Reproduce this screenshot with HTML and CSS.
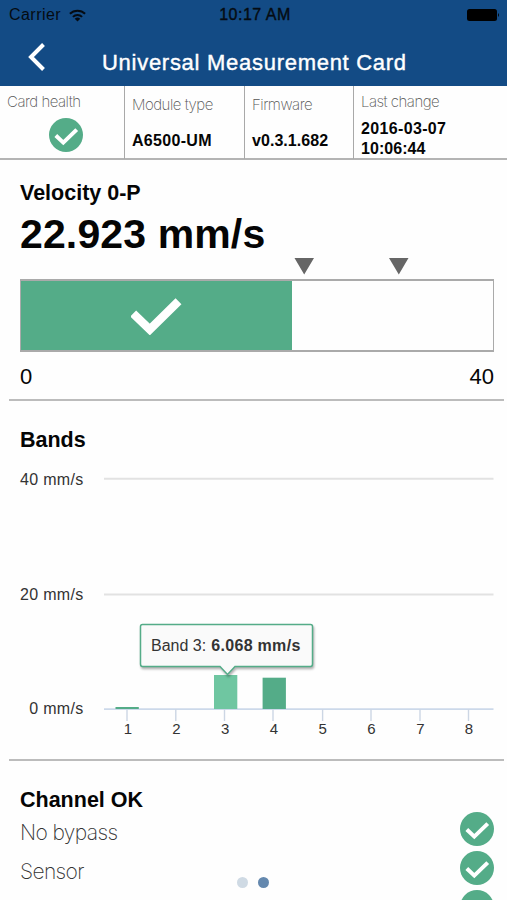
FILE: index.html
```html
<!DOCTYPE html>
<html lang="en">
<head>
<meta charset="utf-8">
<title>Universal Measurement Card</title>
<link rel="stylesheet" href="styles.css">
</head>
<body>
<svg class="defs" aria-hidden="true">
  <symbol id="ok" viewBox="0 0 34 34">
    <circle cx="17" cy="17" r="17" fill="#54ac88"/>
    <path d="M6.8 17.5L14.3 24.6L27.7 11.6" fill="none" stroke="#fff" stroke-width="4"/>
  </symbol>
</svg>
<main class="screen">
  <header class="top">
    <div class="status">
      <div class="carrier"><span>Carrier</span>
        <svg class="wifi" width="17" height="13" viewBox="0 0 17 13"><g fill="none" stroke="#050b12" stroke-width="2"><path d="M.9 4.8A10.8 10.8 0 0 1 16.1 4.8"/><path d="M3.9 7.9A6.5 6.5 0 0 1 13.1 7.9"/></g><path d="M8.5 12.6L5.7 9.8A4 4 0 0 1 11.3 9.8Z" fill="#050b12"/></svg>
      </div>
      <div class="clock">10:17 AM</div>
      <svg class="battery" width="33" height="12" viewBox="0 0 33 12"><rect width="30" height="12" rx="2.5"/><path d="M31 4Q33 6 31 8Z"/></svg>
    </div>
    <div class="nav">
      <svg class="back" width="17" height="28" viewBox="0 0 17 28"><path d="M15.500 1.500L3 14L15.500 26.500" fill="none" stroke="#fff" stroke-width="4"/></svg>
      <h1>Universal Measurement Card</h1>
    </div>
  </header>

  <section class="info">
    <div class="cell health"><span class="label">Card health</span><svg class="check"><use href="#ok"/></svg></div>
    <div class="cell"><span class="label">Module type</span><b class="model">A6500-UM</b></div>
    <div class="cell"><span class="label">Firmware</span><b class="version">v0.3.1.682</b></div>
    <div class="cell change"><span class="label">Last change</span><b><span class="date">2016-03-07</span><br>10:06:44</b></div>
  </section>

  <section class="velocity">
    <h2>Velocity 0-P</h2>
    <div class="value">22.923 mm/s</div>
    <svg class="limits" width="474" height="17" viewBox="0 0 474 17"><path d="M274.5 0H294L284.2 16.5ZM369 0H388.5L378.8 16.5Z" fill="#666"/></svg>
    <div class="gauge"><div class="fill"><svg width="52" height="38" viewBox="0 0 52 38"><path d="M2.200 16.500L18.800 32.500L47.500 4.200" fill="none" stroke="#fff" stroke-width="8.4"/></svg></div></div>
    <div class="scale"><span>0</span><span>40</span></div>
  </section>

  <section class="bands">
    <h2>Bands</h2>
    <svg class="chart" width="474" height="290" viewBox="20 460 474 290">
      <g stroke="#e2e2e2" stroke-width="2"><path d="M104 478.7H493.5M104 594.5H493.5"/></g>
      <path d="M104 709.2H493.5" stroke="#ccd9ea" stroke-width="1.8"/>
      <path d="M127 709V721M175.800 709V721M224.500 709V721M273 709V721M322.600 709V721M371 709V721M420 709V721M468.500 709V721" stroke="#ccd6e4" stroke-width="1.4"/>
      <rect x="115.500" y="707" width="23.300" height="2" fill="#54ac88"/>
      <rect x="214" y="675" width="23.300" height="34" fill="#6fc6a1"/>
      <rect x="262.600" y="677.700" width="23.300" height="31.300" fill="#54ac88"/>
      <g class="units" text-anchor="end"><text x="83.500" y="485">40 mm/s</text><text x="83.500" y="599.500">20 mm/s</text><text x="83.500" y="714">0 mm/s</text></g>
      <g class="ticks" text-anchor="middle"><text x="127.800" y="734">1</text><text x="176.300" y="734">2</text><text x="225.200" y="734">3</text><text x="274" y="734">4</text><text x="322.600" y="734">5</text><text x="371.500" y="734">6</text><text x="420.300" y="734">7</text><text x="469" y="734">8</text></g>
      <path class="tip" d="M142.500 624.500H310.500Q312.500 624.500 312.500 626.500V664Q312.500 666.500 310.500 666.500H235L227.500 674.500L220 666.500H142.500Q140.500 666.500 140.500 664V626.500Q140.500 624.500 142.500 624.500Z"/>
      <text class="tip-name" x="151" y="651">Band 3:</text><text class="tip-value" x="211.300" y="651">6.068 mm/s</text>
    </svg>
  </section>

  <section class="channel">
    <h2>Channel OK</h2>
    <ul>
      <li><span>No bypass</span><svg class="check"><use href="#ok"/></svg></li>
      <li><span>Sensor</span><svg class="check"><use href="#ok"/></svg></li>
      <li><span></span><svg class="check"><use href="#ok"/></svg></li>
    </ul>
  </section>
  <div class="pager"><i></i><i class="on"></i></div>
</main>
</body>
</html>
```
FILE: styles.css
```css
* { box-sizing: border-box; }
body { margin: 0; background: #fff; color: #050505; font-family: "Liberation Sans", Arial, sans-serif; }
.screen { position: relative; width: 507px; height: 900px; overflow: hidden; background: #fefefe; }
.defs { position: absolute; width: 0; height: 0; }
h1, h2, ul { margin: 0; padding: 0; }
svg { display: block; flex: none; }
.check { width: 34px; height: 34px; }

.top { height: 86px; background: #134b85; }
.status { display: grid; grid-template-columns: 1fr auto 1fr; align-items: center; height: 30px; padding: 0 7px 0 9px; color: #050b12; font-size: 16px; }
.carrier { display: flex; align-items: center; gap: 8px; letter-spacing: .45px; }
.clock { padding-left: 1px; letter-spacing: .5px; -webkit-text-stroke: .4px; }
.battery { justify-self: end; fill: #000; }
.nav { display: flex; align-items: center; height: 56px; padding-left: 28px; }
h1 { margin: 9px 0 0 57px; color: #fff; font-size: 22px; font-weight: 400; letter-spacing: .72px; white-space: nowrap; -webkit-text-stroke: .4px; }
.back { margin-bottom: 2px; }

.info { display: grid; grid-template-columns: 125px 120px 109px 1fr; height: 74px; border-bottom: 2px solid #b4b4b4; }
.cell { display: flex; flex-direction: column; padding: 9px 0 0 7px; border-right: 1.5px solid #a9a9a9; white-space: nowrap; }
.cell:last-child { border: 0; }
.label { height: 20px; line-height: 20px; color: #555; font-family: Inter, Roboto, sans-serif; font-size: 15px; font-weight: 200; letter-spacing: -.5px; }
.cell b { margin-top: 16px; font-size: 16px; line-height: 20px; letter-spacing: .05px; }
.cell .model { letter-spacing: .3px; }
.cell .date { letter-spacing: .35px; }
.health, .change { padding-top: 6px; }
.health .check { margin: 6px 0 0 42px; }
.cell.change b { margin-top: 7px; }

h2 { font-size: 21.5px; line-height: 26px; }
.velocity { height: 241px; margin: 0 3px 0 9px; padding: 20px 11px 0; border-bottom: 2px solid #bcbcbc; }
.value { height: 56px; font-size: 41px; font-weight: 700; line-height: 56px; letter-spacing: .13px; white-space: nowrap; }
.limits { margin-top: -4px; }
.gauge { width: 474px; height: 73px; margin-top: 4px; border: 2px solid #aaa; border-width: 2px 1.5px; }
.fill { display: flex; align-items: center; justify-content: center; width: 271px; height: 100%; background: #54ac88; }
.scale { display: flex; justify-content: space-between; width: 474px; margin-top: 12px; font-size: 22px; line-height: 26px; }

.bands { height: 360px; margin: 0 3px 0 9px; padding: 26px 11px 0; border-bottom: 2px solid #bcbcbc; }
.chart { margin-top: 7px; overflow: visible; }
.units { font-size: 16px; fill: #333; letter-spacing: .3px; }
.ticks { font-size: 15px; fill: #333; }
.tip { fill: #fafafa; stroke: #54ac88; stroke-width: 1.5; filter: drop-shadow(1px 2px 1px rgba(0,0,0,.3)); }
.tip-name, .tip-value { font-size: 16px; fill: #333; }
.tip-value { font-weight: 700; letter-spacing: .3px; }

.channel { padding: 26px 13px 0 20px; }
li { display: flex; align-items: center; justify-content: space-between; height: 39px; color: #333; font-family: Inter, Roboto, sans-serif; font-size: 21px; font-weight: 200; letter-spacing: -.62px; }
li .check { margin-bottom: 7px; }
.pager { position: absolute; top: 877px; left: 237px; display: flex; gap: 10px; }
.pager i { width: 11px; height: 11px; border-radius: 50%; background: #cfdae4; }
.pager .on { background: #6488ae; }
```
